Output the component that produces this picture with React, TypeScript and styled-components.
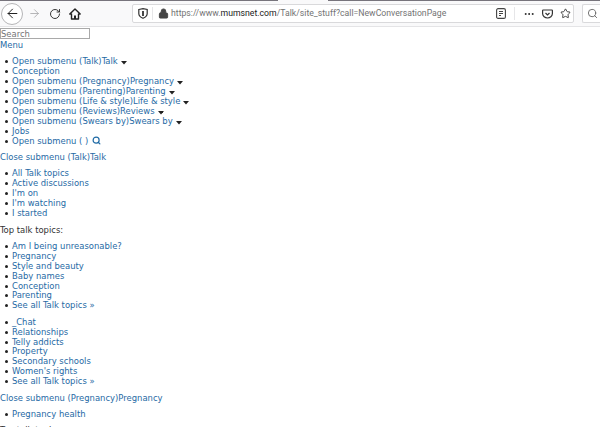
import styled, { createGlobalStyle } from 'styled-components';
import { ArrowLeft, ArrowRight, RotateCw, Lock, MoreHorizontal, Star, Search as SearchIcon } from 'lucide-react';

const GlobalStyle = createGlobalStyle`
  html, body {
    margin: 0;
    padding: 0;
    background: #fff;
    overflow: hidden;
  }
  body {
    font-family: "DejaVu Sans", Verdana, sans-serif;
    font-stretch: condensed;
    font-size: 9.4px;
    line-height: 9.9px;
    color: #333;
  }
`;

const Page = styled.div`
  width: 600px;
  height: 427px;
  overflow: hidden;
`;

const TopStrip = styled.div`
  height: 1px;
  display: flex;
  justify-content: space-between;
  background: #f9f9fa;
`;

const TabEdge = styled.span<{ $width: number }>`
  width: ${p => p.$width}px;
  background: #77747c;
`;

const Toolbar = styled.header`
  height: 25px;
  display: flex;
  align-items: center;
  background: #f9f9fa;
  border-bottom: 1px solid #e4e4e6;
  margin-bottom: 1px;
`;

const NavButtons = styled.div`
  width: 132px;
  display: flex;
  align-items: center;
  flex-shrink: 0;
  padding-left: 1px;
  box-sizing: border-box;
`;

const BackCircle = styled.span`
  width: 22px;
  height: 22px;
  box-sizing: border-box;
  border: 1px solid #b5b5b7;
  border-radius: 50%;
  background: #fff;
  display: flex;
  align-items: center;
  justify-content: center;
  color: #222;
`;

const NavIcon = styled.span<{ $left: number; $dim?: boolean }>`
  display: flex;
  margin-left: ${p => p.$left}px;
  color: ${p => (p.$dim ? '#a0a0a2' : '#222')};
`;

const UrlBar = styled.div`
  width: 442px;
  height: 19px;
  box-sizing: border-box;
  display: flex;
  align-items: center;
  flex-shrink: 0;
  background: #fff;
  border: 1px solid #d9d9db;
  border-radius: 2px;
  padding-left: 5px;
  color: #222;
`;

const UrlText = styled.span`
  flex: 1;
  margin-left: 2px;
  font-family: "Roboto", sans-serif;
  font-stretch: normal;
  font-size: 8.7px;
  color: #737373;
  white-space: nowrap;
`;

const UrlHost = styled.span`
  color: #1a1a1a;
`;

const Divider = styled.span`
  width: 1px;
  height: 13px;
  margin: 0 5px 0 4px;
  background: #e6e6e8;
`;

const UrlActions = styled.div`
  display: flex;
  align-items: center;
  gap: 7px;
  padding-right: 2px;
`;

const ActionDivider = styled(Divider)`
  margin: 0 1px;
`;

const SearchBox = styled.div`
  margin-left: 8px;
  flex: 1;
  height: 19px;
  box-sizing: border-box;
  display: flex;
  align-items: center;
  padding-left: 4px;
  background: #fff;
  border: 1px solid #d9d9db;
  border-right: 0;
  border-radius: 2px 0 0 2px;
  color: #666;
`;

const SearchInput = styled.input`
  display: block;
  width: 90px;
  height: 11px;
  box-sizing: border-box;
  padding: 0;
  border: 1px solid #a9a9a9;
  font-family: "DejaVu Sans", Verdana, sans-serif;
  font-stretch: condensed;
  font-size: 9.4px;
  line-height: 9px;
  &::placeholder {
    color: #757575;
    opacity: 1;
  }
`;

const Link = styled.a`
  color: #1f6aa5;
  text-decoration: none;
`;

const MenuLink = styled(Link)`
  display: block;
  margin-top: 1px;
`;

const Section = styled.div`
  margin: 6.500px 0 0;
`;

const List = styled.ul`
  margin: 6.500px 0;
  padding-left: 12px;
  list-style: none;
`;

const Item = styled.li`
  &::before {
    content: "";
    display: inline-block;
    width: 3px;
    height: 3px;
    margin: 0 4px 1px -7px;
    border-radius: 50%;
    background: #222;
  }
`;

const Para = styled.p`
  margin: 6.500px 0;
`;

const Caret = styled.svg`
  margin-left: 3px;
  vertical-align: -1px;
`;

const LensIcon = styled(SearchIcon)`
  margin-left: 4px;
  vertical-align: -1px;
  color: #1f6aa5;
`;

const CaretIcon = () => (
  <Caret width="6" height="4" viewBox="0 0 6 4">
    <path d="M0 0h6L3 3.5z" fill="#222" />
  </Caret>
);

const menuItems = [
  { text: 'Open submenu (Talk)Talk', caret: true },
  { text: 'Conception' },
  { text: 'Open submenu (Pregnancy)Pregnancy', caret: true },
  { text: 'Open submenu (Parenting)Parenting', caret: true },
  { text: 'Open submenu (Life & style)Life & style', caret: true },
  { text: 'Open submenu (Reviews)Reviews', caret: true },
  { text: 'Open submenu (Swears by)Swears by', caret: true },
  { text: 'Jobs' },
];

const talkLinks = ['All Talk topics', 'Active discussions', "I'm on", "I'm watching", 'I started'];
const topTopics = ['Am I being unreasonable?', 'Pregnancy', 'Style and beauty', 'Baby names', 'Conception', 'Parenting', 'See all Talk topics »'];
const moreTopics = ['_Chat', 'Relationships', 'Telly addicts', 'Property', 'Secondary schools', "Women's rights", 'See all Talk topics »'];

const LinkList = ({ items }: { items: string[] }) => (
  <List>
    {items.map((item, index) => (
      <Item key={`${index}_item`}><Link href="#">{item}</Link></Item>
    ))}
  </List>
);

const App = () => (
  <Page>
    <GlobalStyle />
    <TopStrip>
      <TabEdge $width={278} />
      <TabEdge $width={272} />
    </TopStrip>
    <Toolbar>
      <NavButtons>
        <BackCircle><ArrowLeft size={15} strokeWidth={1.6} /></BackCircle>
        <NavIcon $left={5} $dim><ArrowRight size={13} strokeWidth={1.4} /></NavIcon>
        <NavIcon $left={8}><RotateCw size={12} strokeWidth={1.8} /></NavIcon>
        <NavIcon $left={8}>
          <svg width="12" height="12" viewBox="0 0 12 12">
            <path d="M6 1L.8 6h1.700v5h7V6h1.700z" fill="none" stroke="#222" strokeWidth="1.400" strokeLinejoin="round" />
            <path d="M5 11V7.500h2V11z" fill="#222" />
          </svg>
        </NavIcon>
      </NavButtons>
      <UrlBar>
        <svg width="10" height="11" viewBox="0 0 10 11">
          <path d="M.8 1.500L5 .7l4.200.8v4C9.200 8 7 9.500 5 10.300 3 9.500.8 8 .8 5.500z" fill="none" stroke="#333" strokeWidth="1.200" />
          <path d="M5 3v5" stroke="#333" strokeWidth="1.800" />
        </svg>
        <Divider />
        <Lock size={11} fill="#444" color="#444" />
        <UrlText>https://www.<UrlHost>mumsnet.com</UrlHost>/Talk/site_stuff?call=NewConversationPage</UrlText>
        <UrlActions>
          <svg width="10" height="11" viewBox="0 0 10 11">
            <rect x="0.600" y="0.600" width="8.800" height="9.800" rx="1.500" fill="none" stroke="#444" strokeWidth="1.100" />
            <path d="M3 3.500h4M3 5.500h4M3 7.500h2" stroke="#444" />
          </svg>
          <ActionDivider />
          <MoreHorizontal size={12} />
          <svg width="11" height="10" viewBox="0 0 11 10">
            <path d="M1.200 1h8.600c.3 0 .6.300.6.600V4.500C10.400 7 8 9 5.500 9S.6 7 .6 4.500V1.600c0-.3.3-.6.600-.6z" fill="none" stroke="#333" strokeWidth="1.200" />
            <path d="M3.500 4l2 2 2-2" fill="none" stroke="#333" strokeWidth="1.200" />
          </svg>
          <Star size={11} strokeWidth={1.8} />
        </UrlActions>
      </UrlBar>
      <SearchBox><SearchIcon size={11} /></SearchBox>
    </Toolbar>
    <SearchInput placeholder="Search" />
    <MenuLink href="#">Menu</MenuLink>
    <List>
      {menuItems.map((item, index) => (
        <Item key={`${index}_menu`}>
          <Link href="#">{item.text}</Link>
          {item.caret && <CaretIcon />}
        </Item>
      ))}
      <Item>
        <Link href="#">Open submenu ( )</Link>
        <LensIcon size={9} strokeWidth={3.200} />
      </Item>
    </List>
    <Section>
      <Link href="#">Close submenu (Talk)Talk</Link>
      <LinkList items={talkLinks} />
      <Para>Top talk topics:</Para>
      <LinkList items={topTopics} />
      <LinkList items={moreTopics} />
      <Link href="#">Close submenu (Pregnancy)Pregnancy</Link>
      <LinkList items={['Pregnancy health']} />
      <Para>Top talk topics:</Para>
    </Section>
  </Page>
);

export default App;
